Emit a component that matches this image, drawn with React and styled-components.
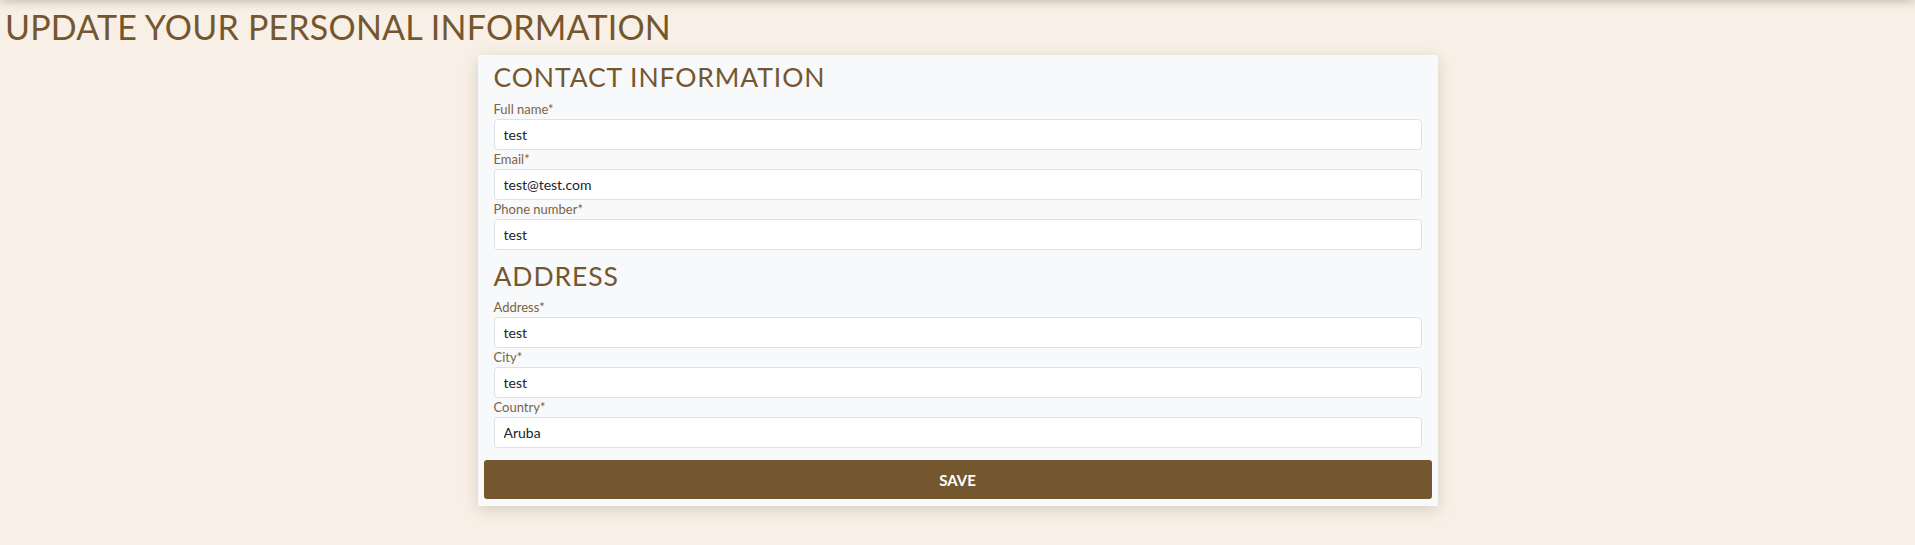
import React, { useState } from 'react';
import styled, { createGlobalStyle } from 'styled-components';

const GlobalStyle = createGlobalStyle`
  body {
    margin: 0;
    background: #f8f0e6;
    font-family: Lato, "Open Sans", sans-serif;
  }
`;

const brown = '#75572f';

// sombra de la barra de navegación (fuera de la vista)
const TopShade = styled.div`
  position: fixed;
  top: -12px;
  left: 0;
  width: 100%;
  height: 12px;
  box-shadow: 0 0 12px rgba(60, 40, 20, 0.35);
  z-index: 10;
`;

const Page = styled.main`
  padding-top: 7px;
  padding-bottom: 40px;
`;

const Title = styled.h1`
  margin: 0 0 7px;
  padding-left: 5px;
  font-size: 34px;
  line-height: 1.2;
  font-weight: 400;
  letter-spacing: 0.2px;
  color: ${brown};
`;

const Card = styled.form`
  width: 960px;
  margin: 0 auto;
  box-sizing: border-box;
  padding: 7px 6px 7px;
  background: #f8f9fa;
  box-shadow: 0 4px 14px rgba(70, 50, 30, 0.18);
`;

const Section = styled.section`
  padding: 0 10px;
  margin-top: ${props => (props.$first ? '0' : '11px')};
`;

const SectionTitle = styled.h2`
  margin: 0 0 6px;
  font-size: 26.5px;
  line-height: 1.2;
  font-weight: 400;
  letter-spacing: 0.9px;
  color: ${brown};
`;

const Field = styled.div`
  display: flex;
  flex-direction: column;
`;

const Label = styled.label`
  font-size: 13px;
  line-height: 19px;
  color: #7a6446;
`;

const Input = styled.input`
  box-sizing: border-box;
  height: 31px;
  width: 100%;
  padding: 0 9px;
  border: 1px solid #dee2e6;
  border-radius: 4px;
  background: #fff;
  font-family: inherit;
  font-size: 14px;
  color: #212529;
  outline: none;
`;

const SaveButton = styled.button`
  display: block;
  width: 100%;
  height: 39px;
  margin-top: 12px;
  border: none;
  border-radius: 3px;
  background: ${brown};
  color: #fff;
  font-family: inherit;
  font-size: 15px;
  font-weight: 700;
  cursor: pointer;
`;

const contactFields = [
  { id: 'fullName', label: 'Full name*', value: 'test' },
  { id: 'email', label: 'Email*', value: 'test@test.com' },
  { id: 'phone', label: 'Phone number*', value: 'test' },
];

const addressFields = [
  { id: 'address', label: 'Address*', value: 'test' },
  { id: 'city', label: 'City*', value: 'test' },
  { id: 'country', label: 'Country*', value: 'Aruba' },
];

function FormField({ field, value, onChange }) {
  return (
    <Field>
      <Label htmlFor={field.id}>{field.label}</Label>
      <Input id={field.id} value={value} onChange={e => onChange(field.id, e.target.value)} />
    </Field>
  );
}

export default function App() {
  const [values, setValues] = useState(() =>
    Object.fromEntries([...contactFields, ...addressFields].map(f => [f.id, f.value]))
  );

  const handleChange = (id, value) => setValues(v => ({ ...v, [id]: value }));

  return (
    <>
      <GlobalStyle />
      <TopShade />
      <Page>
        <Title>UPDATE YOUR PERSONAL INFORMATION</Title>
        <Card onSubmit={e => e.preventDefault()}>
          <Section $first>
            <SectionTitle>CONTACT INFORMATION</SectionTitle>
            {contactFields.map(f => (
              <FormField key={f.id} field={f} value={values[f.id]} onChange={handleChange} />
            ))}
          </Section>
          <Section>
            <SectionTitle>ADDRESS</SectionTitle>
            {addressFields.map(f => (
              <FormField key={f.id} field={f} value={values[f.id]} onChange={handleChange} />
            ))}
          </Section>
          <SaveButton type="submit">SAVE</SaveButton>
        </Card>
      </Page>
    </>
  );
}
